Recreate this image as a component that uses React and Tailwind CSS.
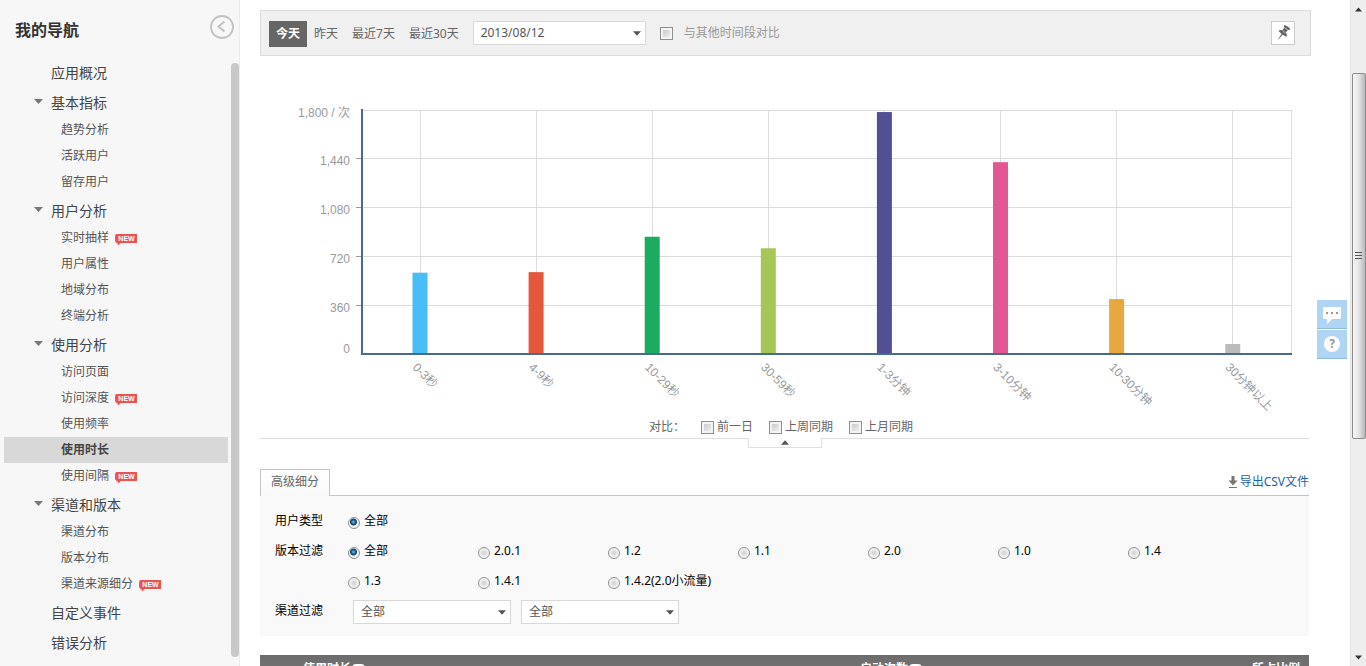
import React, { useState } from 'react';

const navItems = [
  { title: '应用概况' },
  {
    title: '基本指标',
    children: [{ name: '趋势分析' }, { name: '活跃用户' }, { name: '留存用户' }],
  },
  {
    title: '用户分析',
    children: [
      { name: '实时抽样', isNew: true },
      { name: '用户属性' },
      { name: '地域分布' },
      { name: '终端分析' },
    ],
  },
  {
    title: '使用分析',
    children: [
      { name: '访问页面' },
      { name: '访问深度', isNew: true },
      { name: '使用频率' },
      { name: '使用时长' },
      { name: '使用间隔', isNew: true },
    ],
  },
  {
    title: '渠道和版本',
    children: [{ name: '渠道分布' }, { name: '版本分布' }, { name: '渠道来源细分', isNew: true }],
  },
  { title: '自定义事件' },
  { title: '错误分析' },
];

const ranges = ['今天', '昨天', '最近7天', '最近30天'];

const chartData = [
  { label: '0-3秒', value: 600, color: '#49bdf5' },
  { label: '4-9秒', value: 604, color: '#e4573b' },
  { label: '10-29秒', value: 865, color: '#1cab60' },
  { label: '30-59秒', value: 780, color: '#a6c657' },
  { label: '1-3分钟', value: 1785, color: '#524f95' },
  { label: '3-10分钟', value: 1415, color: '#e25794' },
  { label: '10-30分钟', value: 405, color: '#e8a840' },
  { label: '30分钟以上', value: 74, color: '#bbbbbb' },
];

const yTicks = [
  { value: 1800, label: '1,800 / 次' },
  { value: 1440, label: '1,440' },
  { value: 1080, label: '1,080' },
  { value: 720, label: '720' },
  { value: 360, label: '360' },
  { value: 0, label: '0' },
];

const versions = ['全部', '2.0.1', '1.2', '1.1', '2.0', '1.0', '1.4', '1.3', '1.4.1', '1.4.2(2.0小流量)'];

function NewBadge() {
  return (
    <svg width="23" height="12" viewBox="0 0 23 12" className="mt-[3px] ml-[6px] shrink-0">
      <path d="M1 0h21v9H6L3 11.500L2.500 9H1.500L0 7V2z" fill="#e85555" />
      <text x="11.500" y="7" textAnchor="middle" fontSize="7" fontWeight="bold" fill="#fff" fontFamily="Liberation Sans, sans-serif">
        NEW
      </text>
    </svg>
  );
}

function Triangle({ up, className }) {
  return (
    <svg width="9" height="5" viewBox="0 0 9 5" className={className}>
      <path d={up ? 'M0 5L4.500 0L9 5z' : 'M0 0H9L4.500 5z'} fill="currentColor" />
    </svg>
  );
}

function Sidebar() {
  const [active, setActive] = useState('使用时长');

  return (
    <aside className="flex w-60 shrink-0 flex-col border-r border-[#ececec] bg-[#f7f7f7]">
      <div className="flex h-[57px] shrink-0 items-start justify-between pr-[5px] pl-[15px]">
        <h1 className="mt-[18px] text-base leading-6 font-bold text-[#333]">我的导航</h1>
        <button type="button" aria-label="收起导航" className="mt-[15px] text-[#c2c2c2]">
          <svg width="24" height="24" viewBox="0 0 24 24" fill="none" stroke="currentColor">
            <circle cx="12" cy="12" r="11" strokeWidth="1.800" />
            <path d="M14.500 6.500L8.500 11.500L14.500 16.500" strokeWidth="2" />
          </svg>
        </button>
      </div>

      <div className="flex min-h-0 flex-1">
        <nav className="min-w-0 flex-1 overflow-hidden pr-[3px] pl-1">
          {navItems.map((group) => (
            <div key={group.title}>
              <a href="#" className="mt-[2px] flex h-7 items-center pl-[30px] text-sm text-[#444]">
                <span className="w-[17px]">
                  {group.children && <Triangle className="mb-1 text-[#777]" />}
                </span>
                {group.title}
              </a>
              {group.children &&
                group.children.map((item) => (
                  <a
                    key={item.name}
                    href="#"
                    onClick={() => setActive(item.name)}
                    className={`flex h-[26px] items-center pl-[57px] text-xs ${
                      active === item.name ? 'bg-[#d8d8d8] font-bold text-[#444]' : 'text-[#555]'
                    }`}
                  >
                    {item.name}
                    {item.isNew && <NewBadge />}
                  </a>
                ))}
            </div>
          ))}
        </nav>
        <div className="mt-[6px] mb-[9px] w-2 shrink-0 rounded-full bg-[#c8c8c8]"></div>
      </div>
    </aside>
  );
}

function Checkbox({ id }) {
  return (
    <input
      id={id}
      type="checkbox"
      className="size-[13px] shrink-0 appearance-none border border-[#8e8f8f] bg-gradient-to-br from-[#bfc1c4] to-[#f8f8f8] shadow-[inset_0_0_0_2px_#f4f4f4] checked:bg-[#4a7ebb]"
    />
  );
}

function SelectBox({ label, options, className }) {
  return (
    <div className={`relative ${className}`}>
      <select
        aria-label={label}
        className="block h-6 w-full appearance-none border border-[#d9d9d9] bg-white pr-6 pl-[7px] text-xs leading-[22px] text-[#555]"
      >
        {options.map((o) => (
          <option key={o}>{o}</option>
        ))}
      </select>
      <Triangle className="pointer-events-none absolute top-[10px] right-[5px] w-2 text-[#555]" />
    </div>
  );
}

function Toolbar() {
  const [range, setRange] = useState('今天');

  return (
    <div className="mt-[10px] flex h-[46px] items-start border border-[#dcdcdc] bg-[#f0f0f0] pt-[10px] pr-[15px] pl-2 text-xs text-[#666]">
      {ranges.map((r) => (
        <button
          key={r}
          type="button"
          onClick={() => setRange(r)}
          className={`h-[26px] px-[7px] ${range === r ? 'bg-[#666] font-bold text-white' : ''}`}
        >
          {r}
        </button>
      ))}
      <SelectBox label="日期" options={['2013/08/12']} className="ml-[7px] w-[173px]" />
      <div className="ml-[14px] flex h-6 items-center gap-[11px]">
        <Checkbox id="compare-range" />
        <label htmlFor="compare-range" className="text-[#999]">与其他时间段对比</label>
      </div>
      <button
        type="button"
        aria-label="固定"
        className="ml-auto flex size-6 items-center justify-center border border-[#ccc] bg-white"
      >
        <svg width="18" height="18" viewBox="0 0 18 18" fill="#666">
          <g transform="rotate(36 9 9)">
            <path d="M5.500 1.500q3.500-1.400 7 0v1.300q-0.700 0.600-1.400 0.700v3.600c1.700 0.500 2.700 1.500 2.700 2.900q-4.800 1.400-9.600 0c0-1.400 1-2.400 2.700-2.900V3.500q-0.700-0.100-1.400-0.700z" />
            <path d="M8.300 10.300h1.500L9.200 17h-0.400z" />
            <path d="M7 3.600q2 0.700 4 0M7 7.200q2 0.700 4 0" stroke="#ddd" strokeWidth="0.600" fill="none" />
          </g>
        </svg>
      </button>
    </div>
  );
}

function DurationChart() {
  const left = 102;
  const right = 1031;
  const top = 54;
  const bottom = 298;
  const step = 116.1;
  const yOf = (v) => bottom - (v / 1800) * (bottom - top);
  const gridY = (v) => Math.floor(yOf(v)) + 0.5;

  return (
    <svg viewBox="0 0 1049 360" className="block h-auto w-full" fontFamily="Liberation Sans, Noto Sans CJK SC, sans-serif" fontSize="12">
      <g stroke="#dcdcdc" shapeRendering="crispEdges">
        {yTicks.slice(0, 5).map((t) => (
          <line key={t.value} x1={left} x2={right} y1={gridY(t.value)} y2={gridY(t.value)} />
        ))}
        {chartData.map((d, i) => (
          <line key={d.label} x1={Math.floor(160 + i * step) + 0.5} x2={Math.floor(160 + i * step) + 0.5} y1={top} y2={bottom} />
        ))}
        <line x1={right + 0.5} x2={right + 0.5} y1={top} y2={bottom} />
      </g>

      {yTicks.map((t, i) => (
        <g key={t.value}>
          {i > 0 && i < 5 && (
            <line x1={left - 6} x2={left} y1={gridY(t.value)} y2={gridY(t.value)} stroke="#999" shapeRendering="crispEdges" />
          )}
          <text x="90" y={t.value === 0 ? 297 : Math.floor(yOf(t.value)) + 7} textAnchor="end" fill="#999">
            {t.label}
          </text>
        </g>
      ))}

      {chartData.map((d, i) => {
        const x = 160 + i * step;
        return (
          <g key={d.label}>
            <rect x={x - 7.5} y={yOf(d.value)} width="15" height={bottom - yOf(d.value)} fill={d.color} />
            <text transform={`translate(${x - 8} 312) rotate(45)`} fill="#999">
              {d.label}
            </text>
          </g>
        );
      })}

      <path d={`M${left} ${top - 1}V${bottom}H${right + 1}`} fill="none" stroke="#4b6a92" strokeWidth="2" />
    </svg>
  );
}

function CompareRow() {
  return (
    <div>
      <div className="flex h-[22px] items-center justify-center pr-[7px] text-xs leading-5 text-[#666]">
        <span className="mr-4">对比：</span>
        <div className="flex gap-4">
          {['前一日', '上周同期', '上月同期'].map((name) => (
            <div key={name} className="flex items-center gap-[3px]">
              <Checkbox id={name} />
              <label htmlFor={name}>{name}</label>
            </div>
          ))}
        </div>
      </div>
      <div className="flex justify-center border-t border-[#e0e0e0]">
        <button
          type="button"
          aria-label="收起"
          className="-mt-px flex h-[10px] w-[74px] items-center justify-center border border-t-0 border-[#e0e0e0] bg-white text-[#555]"
        >
          <Triangle up className="w-2" />
        </button>
      </div>
    </div>
  );
}

function Radio({ name, label, checked, onChange }) {
  return (
    <label className="flex w-[130px] items-center gap-1 whitespace-nowrap">
      <input
        type="radio"
        name={name}
        checked={checked}
        onChange={onChange}
        className="mt-1 size-3 shrink-0 appearance-none rounded-full border border-[#8e8f8f] bg-[radial-gradient(circle,#cfcfcf_0,#e6e6e6_3px,#fafafa_5px)] checked:bg-[radial-gradient(circle_at_45%_40%,#7cc4ea_0,#1a6296_2px,#123c5e_3px,#f4f4f4_4px)]"
      />
      {label}
    </label>
  );
}

function FilterPanel() {
  const [userType, setUserType] = useState('全部');
  const [version, setVersion] = useState('全部');

  return (
    <section className="mt-[21px]">
      <div className="flex items-end justify-between border-b border-[#c4c4c4]">
        <button
          type="button"
          className="-mb-px h-[27px] border border-b-0 border-[#c4c4c4] bg-gradient-to-b from-white to-[#f9f9f9] px-[10px] pb-[2px] text-xs text-[#666]"
        >
          高级细分
        </button>
        <a href="#" className="flex h-[26px] items-center gap-[2px] text-xs text-[#1f5fa5]">
          <svg width="10" height="12" viewBox="0 0 10 12" fill="#777">
            <path d="M3.500 0h3v4.500h3L5 9.500L0.500 4.500h3zM1 11h8v1H1z" />
          </svg>
          导出CSV文件
        </a>
      </div>

      <div className="bg-[#f9f9f9] px-[15px] py-[10px] text-xs text-black">
        <div className="flex">
          <span className="w-[73px] shrink-0 leading-[30px]">用户类型</span>
          <div className="flex h-[30px]">
            <Radio name="userType" label="全部" checked={userType === '全部'} onChange={() => setUserType('全部')} />
          </div>
        </div>
        <div className="flex">
          <span className="w-[73px] shrink-0 leading-[30px]">版本过滤</span>
          <div className="flex flex-1 flex-wrap leading-[30px]">
            {versions.map((v) => (
              <Radio key={v} name="version" label={v} checked={version === v} onChange={() => setVersion(v)} />
            ))}
          </div>
        </div>
        <div className="flex">
          <span className="w-[78px] shrink-0 leading-[30px]">渠道过滤</span>
          <div className="flex items-end gap-[10px] pb-[2px]">
            <SelectBox label="渠道类型" options={['全部']} className="w-[158px]" />
            <SelectBox label="渠道" options={['全部']} className="w-[158px]" />
          </div>
        </div>
      </div>
    </section>
  );
}

function HelpMark() {
  return (
    <span className="ml-px inline-flex h-3 w-[13px] items-center justify-center rounded-sm bg-white align-middle text-[10px] leading-3 font-bold text-[#666]">
      ?
    </span>
  );
}

function DataTable() {
  return (
    <table className="mt-[19px] w-full table-fixed bg-gradient-to-b from-[#6c6c6c] to-[#777] text-xs text-white">
      <thead>
        <tr className="h-7">
          <th className="w-[53%] pl-[43px] text-left">使用时长<HelpMark /></th>
          <th className="pl-11 text-left">启动次数<HelpMark /></th>
          <th className="pr-[9px] text-right">所占比例</th>
        </tr>
      </thead>
    </table>
  );
}

function FloatingTools() {
  return (
    <div className="absolute top-[300px] right-[3px] flex flex-col gap-px">
      <button type="button" aria-label="反馈" className="flex h-[29px] w-[30px] items-center justify-center border-b border-[#8fbbe0] bg-[#b0d5f4]">
        <svg width="18" height="17" viewBox="0 0 18 17" className="mt-[2px]">
          <path d="M1 0h16a1 1 0 0 1 1 1v10a1 1 0 0 1-1 1H9l-5 5V12H1a1 1 0 0 1-1-1V1a1 1 0 0 1 1-1z" fill="#fff" />
          <path d="M3 5h2v2H3zM8 5h2v2H8zM13 5h2v2h-2z" fill="#999" />
        </svg>
      </button>
      <button type="button" aria-label="帮助" className="flex h-[29px] w-[30px] items-center justify-center border-b border-[#8fbbe0] bg-[#b0d5f4]">
        <span className="flex size-4 items-center justify-center rounded-full bg-white text-xs font-bold text-[#999]">?</span>
      </button>
    </div>
  );
}

function PageScrollbar() {
  return (
    <div className="flex w-4 shrink-0 flex-col items-center border-l border-[#e4e4e4] bg-[#eee] pt-[7px] pb-[6px]">
      <Triangle up className="w-[7px] text-[#333]" />
      <div className="mt-[61px] mb-auto flex h-[55vh] w-[14px] items-center justify-center rounded-xs border border-[#8a8a8a] bg-gradient-to-r from-[#f6f6f6] via-[#e4e4e6] to-[#b8b8bc]">
        <svg width="7" height="8" viewBox="0 0 7 8" fill="#555">
          <path d="M0 0h7v1H0zM0 3h7v1H0zM0 6h7v1H0z" />
        </svg>
      </div>
      <Triangle className="w-[7px] text-[#333]" />
    </div>
  );
}

export default function App() {
  return (
    <div className="flex h-screen overflow-hidden bg-white font-['Noto_Sans','Noto_Sans_CJK_SC',sans-serif]">
      <Sidebar />
      <main className="relative min-w-0 flex-1 overflow-hidden pr-[39px] pl-5">
        <Toolbar />
        <div className="pr-[2px]">
          <DurationChart />
          <CompareRow />
          <FilterPanel />
          <DataTable />
        </div>
        <FloatingTools />
      </main>
      <PageScrollbar />
    </div>
  );
}
